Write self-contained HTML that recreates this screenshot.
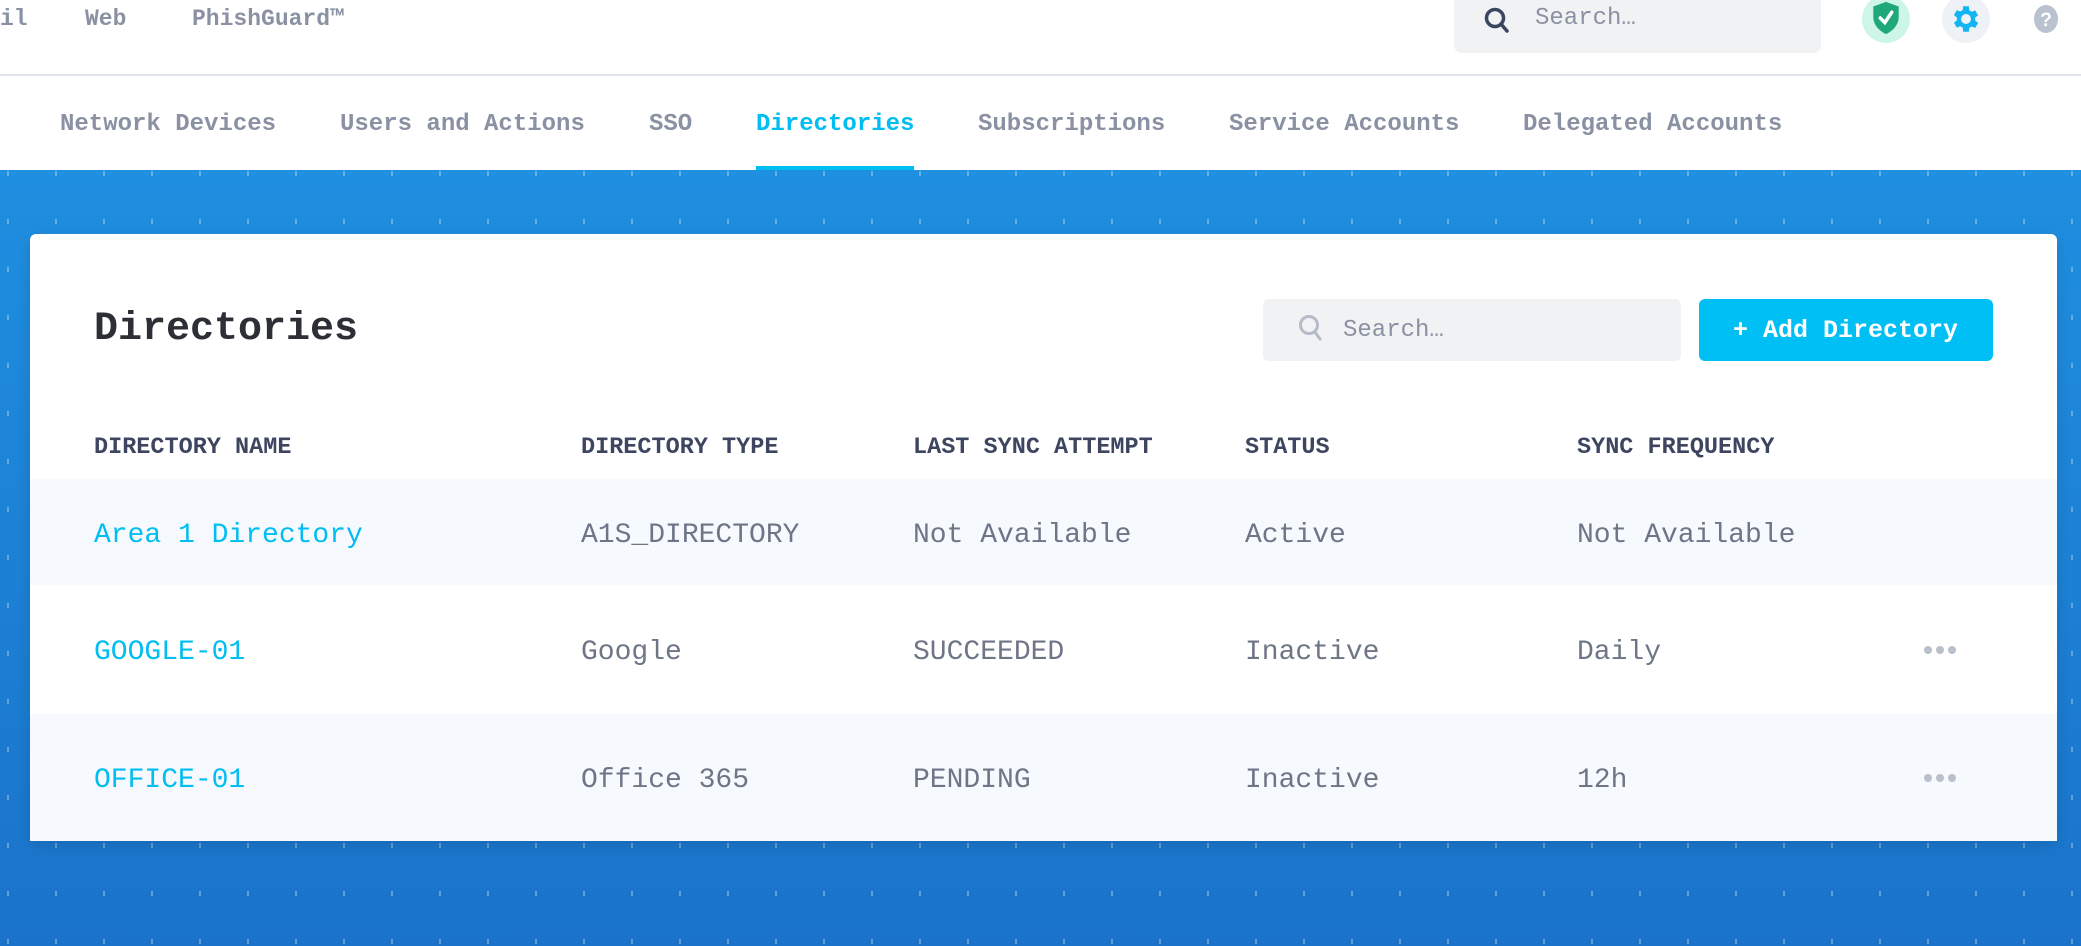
<!DOCTYPE html>
<html><head><meta charset="utf-8"><style>
*{margin:0;padding:0;box-sizing:border-box}
body{width:2081px;height:946px;overflow:hidden;position:relative;font-family:"Liberation Mono",monospace;background:#fff}
.t{position:absolute;white-space:nowrap;line-height:1}
.top{font-size:23px;font-weight:bold;color:#8a91a3;top:8px}
.div{position:absolute;left:0;top:74px;width:2081px;height:2px;background:#dfe5ec}
.tab{font-size:24px;font-weight:bold;color:#8a91a3;top:113px}
.bg{position:absolute;left:0;top:170px;width:2081px;height:776px;background:linear-gradient(#1f8fe0,#1a73c9)}
.card{position:absolute;left:30px;top:234px;width:2027px;height:607px;background:#fff;border-radius:6px;box-shadow:0 4px 14px rgba(0,0,0,.12);overflow:hidden}
.th{font-size:23.5px;font-weight:bold;color:#3d4560;top:436px}
.row{position:absolute;left:30px;width:2027px}
.c{font-size:28px;color:#6e7587}
.l{color:#00bdf2}
.more{position:absolute;width:34px;height:8px}
.more i{position:absolute;top:0;width:8px;height:8px;border-radius:50%;background:#b9c0cb}
</style></head><body>
<div class="t top" style="left:0">il</div>
<div class="t top" style="left:85px">Web</div>
<div class="t top" style="left:192px">PhishGuard™</div>
<div style="position:absolute;left:1454px;top:-6px;width:367px;height:59px;background:#f1f2f4;border-radius:8px"></div>
<svg style="position:absolute;left:1482px;top:6px" width="30" height="30" viewBox="0 0 30 30"><circle cx="13" cy="12" r="8.5" fill="none" stroke="#3a4560" stroke-width="3.5"/><path d="M19 18 L25 25" stroke="#3a4560" stroke-width="3.5" stroke-linecap="round"/></svg>
<div class="t" style="left:1535px;top:7px;font-size:24px;color:#8a91a3">Search…</div>
<div style="position:absolute;left:1862px;top:-5px;width:48px;height:48px;border-radius:50%;background:#cdf6e8"></div>
<svg style="position:absolute;left:1871px;top:0px" width="30" height="36" viewBox="0 0 26 30"><path d="M13 1 L24 5 V14 C24 21 19 26 13 29 C7 26 2 21 2 14 V5 Z" fill="#1fa87a"/><path d="M8 15 L12 19 L18 10" stroke="#fff" stroke-width="3" fill="none" stroke-linecap="round"/></svg>
<div style="position:absolute;left:1942px;top:-5px;width:48px;height:48px;border-radius:50%;background:#eef1f5"></div>
<svg style="position:absolute;left:1949px;top:2px" width="34" height="34" viewBox="0 0 24 24"><path fill="#12b5f2" d="M19.4 13a7.5 7.5 0 000-2l2.1-1.6-2-3.5-2.5 1a7.6 7.6 0 00-1.7-1L15 3h-4l-.3 2.7a7.6 7.6 0 00-1.7 1l-2.5-1-2 3.5L6.6 11a7.5 7.5 0 000 2l-2.1 1.6 2 3.5 2.5-1a7.6 7.6 0 001.7 1L11 21h4l.3-2.7a7.6 7.6 0 001.7-1l2.5 1 2-3.5zM13 15.5a3.5 3.5 0 110-7 3.5 3.5 0 010 7z" transform="translate(-1 0)"/></svg>
<svg style="position:absolute;left:2033px;top:4px" width="26" height="30" viewBox="0 0 26 30"><ellipse cx="13" cy="15" rx="12" ry="14" fill="#b9c2ce"/><text x="13" y="22" font-family="Liberation Sans" font-weight="bold" font-size="19" fill="#fff" text-anchor="middle">?</text></svg>
<div class="div"></div>
<div class="t tab" style="left:60px">Network Devices</div>
<div class="t tab" style="left:340px">Users and Actions</div>
<div class="t tab" style="left:649px">SSO</div>
<div class="t tab" style="left:756px;color:#00bdf2">Directories</div>
<div style="position:absolute;left:756px;top:166px;width:158px;height:4px;background:#00bdf2"></div>
<div class="t tab" style="left:978px">Subscriptions</div>
<div class="t tab" style="left:1229px">Service Accounts</div>
<div class="t tab" style="left:1523px">Delegated Accounts</div>
<div class="bg"></div>
<svg style="position:absolute;left:0;top:170px" width="2081" height="776"><defs><pattern id="p" x="7" y="1" width="48" height="48" patternUnits="userSpaceOnUse"><rect width="2" height="5" fill="rgba(255,255,255,.3)"/></pattern></defs><rect width="2081" height="776" fill="url(#p)"/></svg>
<div class="card"></div>
<div class="t" style="left:94px;top:310px;font-size:40px;font-weight:bold;color:#2d2f36">Directories</div>
<div style="position:absolute;left:1263px;top:299px;width:418px;height:62px;background:#f1f2f4;border-radius:6px"></div>
<svg style="position:absolute;left:1297px;top:313px" width="28" height="30" viewBox="0 0 28 30"><circle cx="12" cy="12" r="8.5" fill="none" stroke="#b4bcc8" stroke-width="3"/><path d="M18 19 L23 26" stroke="#b4bcc8" stroke-width="3" stroke-linecap="round"/></svg>
<div class="t" style="left:1343px;top:319px;font-size:24px;color:#8a91a3">Search…</div>
<div style="position:absolute;left:1699px;top:299px;width:294px;height:62px;background:#00bff5;border-radius:6px"></div>
<div class="t" style="left:1733px;top:318px;font-size:25px;font-weight:bold;color:#fff">+ Add Directory</div>
<div class="t th" style="left:94px">DIRECTORY NAME</div>
<div class="t th" style="left:581px">DIRECTORY TYPE</div>
<div class="t th" style="left:913px">LAST SYNC ATTEMPT</div>
<div class="t th" style="left:1245px">STATUS</div>
<div class="t th" style="left:1577px">SYNC FREQUENCY</div>
<div class="row" style="top:479px;height:106px;background:#f6f9fd"></div>
<div class="row" style="top:714px;height:127px;background:#f6f9fd"></div>
<div class="t c l" style="left:94px;top:522px">Area 1 Directory</div>
<div class="t c" style="left:581px;top:522px">A1S_DIRECTORY</div>
<div class="t c" style="left:913px;top:522px">Not Available</div>
<div class="t c" style="left:1245px;top:522px">Active</div>
<div class="t c" style="left:1577px;top:522px">Not Available</div>
<div class="t c l" style="left:94px;top:639px">GOOGLE-01</div>
<div class="t c" style="left:581px;top:639px">Google</div>
<div class="t c" style="left:913px;top:639px">SUCCEEDED</div>
<div class="t c" style="left:1245px;top:639px">Inactive</div>
<div class="t c" style="left:1577px;top:639px">Daily</div>
<div class="more" style="left:1924px;top:646px"><i style="left:0"></i><i style="left:12px"></i><i style="left:24px"></i></div>
<div class="t c l" style="left:94px;top:767px">OFFICE-01</div>
<div class="t c" style="left:581px;top:767px">Office 365</div>
<div class="t c" style="left:913px;top:767px">PENDING</div>
<div class="t c" style="left:1245px;top:767px">Inactive</div>
<div class="t c" style="left:1577px;top:767px">12h</div>
<div class="more" style="left:1924px;top:774px"><i style="left:0"></i><i style="left:12px"></i><i style="left:24px"></i></div>
</body></html>
